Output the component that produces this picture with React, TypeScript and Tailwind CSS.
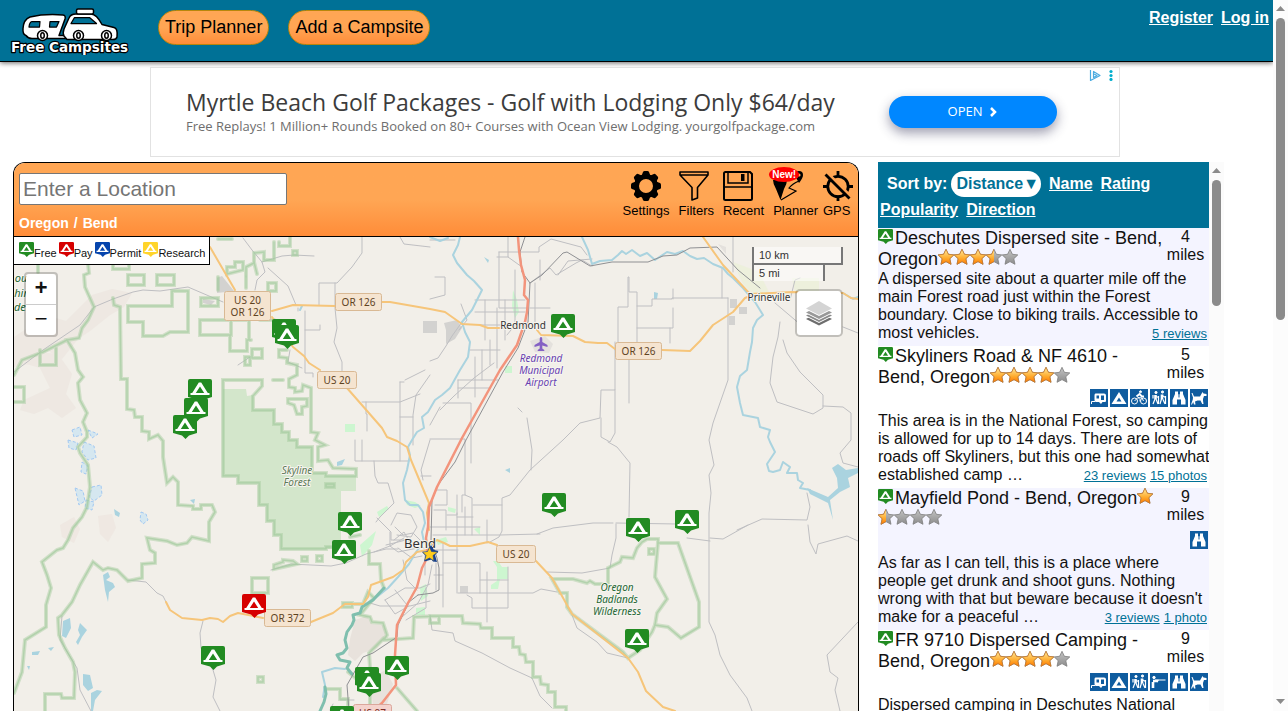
import type { ReactNode } from 'react'

type PinColor = 'green' | 'red' | 'blue' | 'yellow'
type Activity = 'rv' | 'tent' | 'bike' | 'hike' | 'view' | 'shoot' | 'dog'

interface Campsite {
  name: string
  miles: number
  stars: number
  activities: Activity[]
  text: string
  links: string[]
}

const campsites: Campsite[] = [
  {
    name: 'Deschutes Dispersed site - Bend, Oregon',
    miles: 4,
    stars: 3.5,
    activities: [],
    text: 'A dispersed site about a quarter mile off the main Forest road just within the Forest boundary. Close to biking trails. Accessible to most vehicles.',
    links: ['5 reviews'],
  },
  {
    name: 'Skyliners Road & NF 4610 - Bend, Oregon',
    miles: 5,
    stars: 4,
    activities: ['rv', 'tent', 'bike', 'hike', 'view', 'dog'],
    text: 'This area is in the National Forest, so camping is allowed for up to 14 days. There are lots of roads off Skyliners, but this one had somewhat established camp …',
    links: ['23 reviews', '15 photos'],
  },
  {
    name: 'Mayfield Pond - Bend, Oregon',
    miles: 9,
    stars: 1.5,
    activities: ['view'],
    text: "As far as I can tell, this is a place where people get drunk and shoot guns. Nothing wrong with that but beware because it doesn't make for a peaceful …",
    links: ['3 reviews', '1 photo'],
  },
  {
    name: 'FR 9710 Dispersed Camping - Bend, Oregon',
    miles: 9,
    stars: 4,
    activities: ['rv', 'tent', 'hike', 'shoot', 'view', 'dog'],
    text: 'Dispersed camping in Deschutes National',
    links: [],
  },
]

const legend: { label: string; color: PinColor }[] = [
  { label: 'Free', color: 'green' },
  { label: 'Pay', color: 'red' },
  { label: 'Permit', color: 'blue' },
  { label: 'Research', color: 'yellow' },
]

const pins: { x: number; y: number; color: PinColor }[] = [
  { x: 272, y: 319, color: 'green' },
  { x: 275, y: 325, color: 'green' },
  { x: 551, y: 314, color: 'green' },
  { x: 188, y: 379, color: 'green' },
  { x: 184, y: 398, color: 'green' },
  { x: 173, y: 415, color: 'green' },
  { x: 338, y: 512, color: 'green' },
  { x: 332, y: 540, color: 'green' },
  { x: 542, y: 493, color: 'green' },
  { x: 626, y: 518, color: 'green' },
  { x: 675, y: 510, color: 'green' },
  { x: 242, y: 594, color: 'red' },
  { x: 201, y: 646, color: 'green' },
  { x: 625, y: 629, color: 'green' },
  { x: 385, y: 656, color: 'green' },
  { x: 355, y: 667, color: 'green' },
  { x: 357, y: 673, color: 'green' },
  { x: 330, y: 706, color: 'green' },
]

const shields: { x: number; y: number; w: number; lines: string[]; pink?: boolean }[] = [
  { x: 224, y: 291, w: 47, lines: ['US 20', 'OR 126'] },
  { x: 335, y: 293, w: 47, lines: ['OR 126'] },
  { x: 317, y: 371, w: 40, lines: ['US 20'] },
  { x: 615, y: 342, w: 47, lines: ['OR 126'] },
  { x: 496, y: 545, w: 40, lines: ['US 20'] },
  { x: 264, y: 609, w: 47, lines: ['OR 372'] },
  { x: 353, y: 704, w: 39, lines: ['US 97'], pink: true },
]

const pinFill: Record<PinColor, string> = {
  green: '#228b22',
  red: '#d60000',
  blue: '#0645ad',
  yellow: '#ffd42a',
}

function PinShape({ color }: { color: PinColor }) {
  return (
    <>
      <path d="M2 0h20a2 2 0 0 1 2 2v16l-8 2.5-3.500 3.500-3.500-3.500L0 18V2a2 2 0 0 1 2-2z" fill={pinFill[color]} />
      <path d="M10.800 3.500h2.400L19.800 14h1.700v2h-19v-2h1.700zM12 7.500 7.800 14h8.400z" fill="#fff" fillRule="evenodd" />
    </>
  )
}

function Pin({ color, className }: { color: PinColor; className?: string }) {
  return (
    <svg viewBox="0 0 24 24" className={className}>
      <PinShape color={color} />
    </svg>
  )
}

const STAR = 'M8 .3l2.400 5 5.400.6-4 3.800 1.200 5.600L8 12.600l-5 2.700 1.200-5.600L.2 5.900l5.400-.6z'

function Star({ fill }: { fill: number }) {
  return (
    <svg viewBox="0 0 16 16" className="inline-block size-4 align-baseline">
      <path d={STAR} fill="url(#starOff)" stroke="#7d7d7d" strokeWidth=".8" />
      {fill > 0 && (
        <path
          d={STAR}
          fill="url(#starOn)"
          stroke="#c87a2c"
          strokeWidth=".8"
          clipPath={fill < 1 ? 'url(#starHalf)' : undefined}
        />
      )}
    </svg>
  )
}

const activityArt: Record<Activity, ReactNode> = {
  rv: (
    <>
      <path d="M5.500 4.500H14q2 0 2 2V12q0 1-1 1h-2.500L11 15l-2-2H6q-1.500 0-1.500-2V6.500q0-2 1-2z" fill="#fff" />
      <path d="M6.500 6.500h2.500v3H6.500zM11 6.500h3v4.500h-3z" fill="#0f5c9f" />
      <path d="M1.500 15v-2.500H5" stroke="#fff" fill="none" />
    </>
  ),
  tent: <path d="M9 3 16.500 15h-15zM9 8.500 6.500 12.500h5z" fill="#fff" fillRule="evenodd" />,
  bike: (
    <g stroke="#fff" fill="none">
      <circle cx="4.500" cy="12" r="3" />
      <circle cx="13.500" cy="12" r="3" />
      <path d="M4.500 12 8 8.500l2 2v2M8 8.500 12 9l1.500 3" />
      <path d="m6.500 7.500 3-2.500 2.500 2.500h2" strokeWidth="2" />
      <circle cx="10.500" cy="2.800" r="1" fill="#fff" />
    </g>
  ),
  hike: (
    <g stroke="#fff" fill="none">
      <circle cx="6" cy="3.500" r="1.100" fill="#fff" />
      <circle cx="12.500" cy="3" r="1.100" fill="#fff" />
      <path d="M5.500 6v4M12 5.500v5" strokeWidth="2.600" />
      <path d="m5 10-2 5M6 10l2 5M8.500 7v8M3 6v3.500M11.500 10l-1.500 5M13 10.500l2 4.500M15.500 7v8M13 7l2.500 1.500M6 7.500l2.500 1" strokeWidth="1.200" />
    </g>
  ),
  view: (
    <path d="M5 2.500h3V5l.5.500v3h1v-3L10 5V2.500h3V5l2.500 6v4.500h-4.500V10.500H7v5H2.500V11L5 5z" fill="#fff" />
  ),
  shoot: (
    <g stroke="#fff" fill="none">
      <circle cx="4" cy="4.500" r="1.200" fill="#fff" />
      <path d="M3 8h5M3 9v6" strokeWidth="2.600" />
      <path d="M5 7h10.500M7 9l2-2.500" strokeWidth="1.200" />
    </g>
  ),
  dog: (
    <path d="M1.500 4 2.500 4 4 7.500h6L12.500 3l1 1.500 3 .5v2h-2.500l-1 3v1.500l.5 3.500h-1.300l-1.700-3.500H7.500L5 12.500l.5 3H4L3.200 13 2 15.500H1l1.800-5L3 8.500z" fill="#fff" />
  ),
}

function ActivityIcon({ kind }: { kind: Activity }) {
  return (
    <svg viewBox="0 0 18 18" className="size-[18px] bg-[#0f5c9f]">
      {activityArt[kind]}
    </svg>
  )
}

function Logo() {
  return (
    <svg viewBox="0 0 240 96" className="h-12 w-[120px]">
      <g fill="#fff" stroke="#000" strokeWidth="3" strokeLinejoin="round">
        <path d="M32 57q-7-2-6-14 1-18 14-23 30-7 66-4 6 1 4 8L98 57h14v6H44q-8 0-12-6z" />
        <path d="M108 58q-3-6 0-14l10-22q3-8 14-8h30q11 0 22 21l24 6q8 2 6 19-1 5-8 5H114z" />
        <rect x="133" y="4" width="34" height="10" rx="3" />
      </g>
      <g fill="#007196" stroke="#000" strokeWidth="2.500" strokeLinejoin="round">
        <path d="M122 33l7-12h30l14 12zM38 40q1-10 6-11h16l-1 11zM80 29h18l-5 11H79z" />
      </g>
      <g fill="#fff" stroke="#000" strokeWidth="3">
        <circle cx="65" cy="57" r="10" />
        <circle cx="137" cy="57" r="10" />
        <circle cx="193" cy="57" r="10" />
        <ellipse cx="65" cy="57" rx="3.500" ry="5.500" />
        <ellipse cx="137" cy="57" rx="3.500" ry="5.500" />
        <ellipse cx="193" cy="57" rx="3.500" ry="5.500" />
      </g>
      <text
        x="2"
        y="90"
        fontSize="27"
        fontWeight="bold"
        fill="#fff"
        stroke="#000"
        strokeWidth="5"
        strokeLinejoin="round"
        paintOrder="stroke"
        className="font-['DejaVu_Sans',sans-serif]"
      >
        Free Campsites
      </text>
    </svg>
  )
}

const GearIcon = () => (
  <svg viewBox="0 0 30 30" className="size-[30px]">
    <circle cx="15" cy="15" r="9.500" fill="none" stroke="#000" strokeWidth="5" />
    {[0, 45, 90, 135, 180, 225, 270, 315].map(a => (
      <path key={a} d="M10.500 5 12 1q.5-1 1.500-1h3q1 0 1.500 1l1.500 4z" transform={`rotate(${a} 15 15)`} />
    ))}
  </svg>
)
const FilterIcon = () => (
  <svg viewBox="0 0 30 30" className="size-[30px]" fill="none" stroke="#000" strokeWidth="1.600" strokeLinejoin="round">
    <path d="M1 1h28v3L18.500 16.500V27L13 29V16.500L1 4zM1 4h28" />
  </svg>
)
const DiskIcon = () => (
  <svg viewBox="0 0 30 30" className="size-[30px]">
    <path d="M1 2.500Q1 1 2.500 1H27l2 2v24.500q0 1.500-1.500 1.500h-25Q1 29 1 27.500z" fill="none" stroke="#000" strokeWidth="2" />
    <path d="M5 1v11h20V1M1 16h28" fill="none" stroke="#000" strokeWidth="1.500" />
    <path d="M18 3h3.500v7H18z" />
  </svg>
)
const PlannerIcon = () => (
  <svg viewBox="0 0 30 30" className="size-[30px]">
    <path d="M0 9h14q0 4-3 9L7.500 29 3 18Q0 13 0 9z" />
    <path d="M26 0a4 4 0 0 1 4 4q0 3-4 8-3-5-4-8a4 4 0 0 1 4-4z" />
    <circle cx="26" cy="4" r="1.600" fill="#ffa352" />
    <path d="M26 10q-7 3-10 7l7 3-15 9" fill="none" stroke="#000" strokeWidth="1.200" />
  </svg>
)
const GpsOffIcon = () => (
  <svg viewBox="0 0 30 30" className="size-[30px]" fill="none" stroke="#000" strokeWidth="2.800">
    <circle cx="15" cy="15.500" r="10.200" />
    <path d="M15 0v6M15 24.500V30M0 15.500h6M24 15.500h6" />
    <path d="M5 2.500 29 26.500" stroke="#ffa352" strokeWidth="3" />
    <path d="m2.500 3.500 24 24" />
  </svg>
)

function Tool({ label, icon, center }: { label: string; icon: ReactNode; center?: boolean }) {
  return (
    <button className={center ? 'flex flex-col items-center' : 'flex flex-col items-start'}>
      {icon}
      <span className="mt-[2px] text-[13px] leading-4">{label}</span>
    </button>
  )
}

/* Basemap */

const forestBoundaries = [
  'M88 264 89 273 84 275 85 287 94 307 88 320 82 328 79 338 67 340 75 353 78 370 83 377 78 383 80 400 87 413 83 422 87 432 87 437 78 447 80 453 88 465 90 487 87 507 82 517 73 528 68 540 63 548 57 550 42 562 47 575 51 588 46 605 46 627 25 640 22 672 14 693',
  'M67 340 43 352 22 360 14 375',
  'M40 350v15h16v-17M14 387h10v15h-10',
  'M38 264v8',
  'M113 264v5h16v-5',
  'M128 275h16v10h-16zM157 275h17v10h-17z',
  'M172 291h16v41h-18l-7 4h-20v-14h-15v-16h44z',
  'M113 298 114 305 120 307 121 379 127 379 127 409 134 410 135 417 142 417 142 431 149 432 149 439 158 435 163 441 163 457 167 483 173 477 178 482 178 505 193 506 193 509 201 509 201 505 212 505 215 512 209 522 209 541 192 537 187 543 177 545 167 541 147 538 150 550 155 553 155 563 142 564 142 578 128 581 117 570 108 568 103 570 93 562 80 585 72 602 62 615 58 618 59 635 65 648 73 662 75 672 74 698 62 698 61 694 45 694 45 711',
  'M218 239h14M290 237v9h-11v-4M274 242v18h-10v-8l-10 1v10l-8 4v10M243 262h-8v5h-8v7l16-4zM268 283h8v8h-8zM293 251h4v4h-4z',
  'M246 276v12M254 262l3 12',
  'M201 298h17v8h-17zM200 320h31v15h-31zM218 277v13M231 320h18v20M230 335v16h17v-11h4',
  'M252 349h10v9h-10zM245 357h5v8h-5zM260 320h14',
  'M287 350h-8v7l8 1v5l10 2v10l-8 4v8l6 1v4l7-1 1-6 8 3v44l7 1-3 7 10 5-7 2v14l10-1 5 8 23 1v7h-30v-3h-14',
  'M288 399h19v7l-5 1v7h-5l-3-9-6-2zM273 380h10M326 484h8v3h-8z',
  'M223 476v-96h39v6l-9 10v14h21v14h8v8h7v8h8v7h15v26',
  'M223 476h15v7h21v22h8v16h7v14h7v14h45v-2h22M350 537l10-2M369 551v13h11l1 16 3 8',
  'M302 557h5v4h-5zM317 556h5v5h-5zM274 565l9-3v-2l10 1 4 3-14 3-9 2zM252 578h16v15h-16zM258 677h5v5h-5z',
  'M343 603h9v4h-9zM352 604h11l5-12 6 6-14 17 10 2 2 5 11 1 4 12-3 5 29-2 1-21 25-1v7h-9v-7h32l1 7 17 1 1 4h11v10h21v9h6l1 7 5 1 1 7h7v15h7l1 7 7 1v7h7v15h11v4',
  'M384 638l-15 15 1 14M348 672l10 8M370 690v21M397 688l20 23M326 689h14v10h8v6',
  'M552 579h21l14 4 3-2 5 3h13v-16l12-6 2-5 11 1 4-10 5-6 5-3h11v4h20l21 59v25l-18 11-13-11-13-2-3 7-12 18-12 8-5-6-51-38-5-7v-14h-7z',
  'M658 543l-2 22-1 12 12 22-10 14-2 12M649 549h5v5h-5z',
]

const rivers = [
  'M460 237 458 245 453 255 457 263 467 275 474 281 482 290 478 298 472 310 462 322 465 332 470 342 468 357 460 370 450 388 442 395 435 400 428 412 422 417 424 428 417 432 412 440 408 447 410 455 407 470 403 483 405 500 410 505 418 505 423 512 425 523 422 532 424 542 416 552 409 564 398 577 388 588 373 600',
  'M582 237 588 250 592 264 600 261 612 260 618 255 622 251 626 254 632 250 640 256 647 253 655 260 667 252 675 254 683 251 690 256 697 259 704 258 713 264 723 268 728 274 733 278 743 288 755 302 763 315 757 320 753 328 752 342 750 352 747 370 740 376 737 387 740 403 743 415 758 418 760 427 770 430 768 437 770 442 775 452 767 464 769 471 773 472 780 470 783 462 790 467 787 473 797 473 798 480 803 483 800 488 810 490',
  'M430 237l10 4 8-3M345 669l-10-1-13 4 3 13-2 12',
  'M843 293l10 6 5-2M300 310l2-4',
]

const minorRoads = [
  'M62 616 60 640 77 668 80 690 91 711M128 580 146 582 157 593 163 596 166 602',
  'M203 621 200 633 201 648 213 670 216 680 213 697 220 711',
  'M14 372 43 350 80 325 94 307 113 299 133 292 143 290 160 291 188 287 223 302',
  'M243 238 252 250 262 262 265 272 257 280 255 290M262 262l20-6 12-1 20 1M268 268l20 18 8 19M400 237l4 7 26 3',
  'M362 237v16l-10 14-15 16h-18v22M335 283v25l2 20-3 14 8 20v9M305 311v62h8v4M298 311v-3M305 330h15v-5M238 365l12-8',
  'M290 350l-2 12 14 6',
  'M430 375l-14 20-3 20v30M400 382h4M400 382v79M362 402h38l20-8M366 402v12h1v17M355 440v21h54M362 440v21M400 417h13M374 461l1 15 3 7h10l6 20-14 14-4 5M430 361l8-3 8-12 6-10 10-14M430 440l-9 30 2 10M421 476h10',
  'M499 252h40v-5l12-8 30 8 6 8M499 252v56h28M508 237v20l14 10M515 270v55l-8 10M475 300h50M475 312h50M480 325h40M485 300v40M497 308v60M505 300v40M490 340v25M535 283v40M530 308h20M540 260v20M470 350h30M475 357v40M482 350v30M458 380h40M458 388h32M443 403h28v60M458 380v18M440 410l14-14 20-18 20-15',
  'M430 240h25M497 257h11M435 277h10v18l-15 4M461 304l6 16-8 10M425 370l-20 10',
  'M530 283 550 268 556 275 576 263 582 260 592 266',
  'M558 275l10-14 24-2',
  'M430 439h35v56l7 3v37M462 512v-17h3M473 505h29M430 425l10-18',
  'M490 542l9-5 3-6v-33l8-3 20-25 33-30 17-17 20-5 1-28h14v-40M615 350v-8M615 390v43l-5 9-9-5v-19M608 442l9 5 13 16-1 54M629 403v-46M637 342v-50h-8v-15h-1v30h-10v35M637 328h36v-20M637 306h15v-7h20v-1h56M673 299v-10M728 298v82l-15 43-4 17 5 25-5 10 2 18-2 20v109l6 13 5 20 10 20 17 23 5 13',
  'M527 418l5 32-1 20M518 408l4 4M733 237v35M670 328v15',
  'M783 340 787 353 800 372 823 395v13l-10 6-36-12-7-19 3-26 5-20 2-15M823 406l20 1 8 6v27l-11 13 3 10 15 4M775 303l26 22M843 327l15 6M722 298v-30M790 300l5-20 5-2',
  'M737 530l25-11 45 1 3-13-3-14M808 525l2 17 6 12 2-10 29-8 11 5M858 622 827 655 830 672 838 678 835 690 840 711M616 523l61 1M710 538l13 1 25-14M687 538l23 3M537 534l16-6 40-5h20',
  'M547 572l35 1 28-5 2-13 4-17v-14M458 593h75l8-4 16 3M572 615 577 628 597 642 607 653 628 658M430 615l2 15 21 3 2 8 27 12 28 15 22 10 8 18 12 12',
  'M433 535h67l40-1M443 543v64M457 513v80M443 563h37v30M480 580h28M508 567v41h-36v-10l-5-3M487 572v50M487 520v23M465 507v28M473 517h-16M434 510h12v20M437 490h10v15h-12M447 515h10v-20M430 527h50M434 550h24M434 575h9M436 563v27',
  'M385 600l20-12h15l10-4M370 603l10 3h30l20-5M390 532v14l8 6 20-4M374 552l16-6 14-8M377 518l14 14v8h20M391 525l6-12 14 2 6 12-6 10-14-2M394 540l10-8 8 14 12 2M395 527l8 8 10-2 8 8M398 548l14 10 10-2M386 545l20-5 12 4M403 560l4 20 10 10M395 590l12 15M425 555v20M432 565l-4 20-10 18-16 14M385 600l10 14 14-8',
  'M271 570l20-6 20 1 20 1 15-3 20-9 20-5h12',
  'M340 700h14M333 704l-3 6M406 620l20-12v-20',
]

const highways = [
  'M210 247 235 290M272 317 293 347 304 356 309 363 320 370M347 388 382 428 387 437 397 441 407 447 411 460 429 503 427 513 429 530',
  'M272 311 293 305 335 306M382 302 390 302 430 309 445 312 462 324 480 325 488 328 513 328 523 325M537 330 541 335 573 336 585 342 598 343 607 343 615 349M662 350 690 351 700 341 713 325 733 312 745 298 750 296M703 237 723 265 750 294 792 292 843 293 851 298 858 299',
  'M430 545 437 540 444 543 450 546 470 546 488 542 497 545M536 561 552 578 572 614 628 658 638 672 646 691 663 707 675 711',
  'M166 602 170 610 182 618 202 620 210 618 218 619 223 622 230 616 238 613 263 618M311 622 333 613 345 604 363 604 368 597 371 585 393 577 403 570 406 562 417 552 427 550',
]

const railways = [
  'M525 237 520 252 522 272 530 283 528 322 518 348 503 372 466 440 455 462 438 485 432 500 431 540 437 558 439 568 439 590 433 593 418 595',
  'M530 283 542 275 563 253 567 252 590 266 612 262 648 262 663 256 677 255 690 248 717 247 738 270 760 288',
  'M418 595 409 602 398 625 397 637 373 653 363 657 347 685 349 711',
]

function MapLabel({ x, y, color, italic, size = 10, children }: { x: number; y: number; color: string; italic?: boolean; size?: number; children: string }) {
  return (
    <text
      x={x}
      y={y}
      textAnchor="middle"
      fontSize={size}
      fontStyle={italic ? 'italic' : 'normal'}
      fill={color}
      stroke="#f7f5f0"
      strokeWidth="2"
      strokeLinejoin="round"
      paintOrder="stroke"
    >
      {children}
    </text>
  )
}

function BaseMap() {
  return (
    <svg
      viewBox="14 237 844 474"
      preserveAspectRatio="xMidYMin slice"
      className="absolute inset-0 size-full bg-[#f2efe9] font-['Noto_Sans',sans-serif]"
    >
      {/* lava fields and urban land */}
      <g fill="#ebe2dc" opacity=".5">
        <path d="M92 295l20-6 20 4-8 14-14 8-20 16-12 8-16 20-14-8-14 12-20 4v-30l18-12 20-8 14 4 10-10z" />
        <path d="M18 350l40 4 14 20-6 20 10 14-14 10-14-10-14 6-14-4 4-10 26-12-10-20-20-6z" />
        <path d="M98 516l14-2 4 14-8 14-8-8zM60 525l14-8 6 12-6 14-12-6z" />
      </g>
      <path d="M355 620l12-4 5 8 12 1 3 11-10 12-14 5-8 8-7-6 2-16zM370 680l15-10 8 14-6 20-14 2z" fill="#e8e2dc" />
      <path d="M217 278l5-2 12 15-17 2zM203 299l12 2-4 4-8-2zM423 321h14v12h-14zM444 323l13-3 5 8-7 11-9 5v-14zM730 299h7v9h-7zM739 307h8v7h-8zM729 316h6v9h-6zM460 586h8v7h-8z" fill="#d3d2d0" />
      <path d="M718 244l8 3v7zM530 341l15-5 8 8-4 9-14-1z" fill="#e4e1dd" />
      <path d="M733 262l26 10 10 20-12 6-14-14zM792 278h27v14h-24z" fill="#eaf0d4" opacity=".6" />
      <path d="M223 389h23l1 7 6-1v15h21v14h8v8h7v8h8v7h15v26h14v3h30v15h-15v58h-60v-14h-7v-14h-7v-16h-8v-22h-21v-7h-15z" fill="#d3e6cb" />
      <path d="M345 424h10v8h-10zM493 561h5l4 6h6v12h-8l-2 10h-7v-4l6-4v-14zM420 587l6-3 2 12-7 5zM416 608l9-1v8h-9zM505 366h7v7h-7zM405 500l10 2 6 4-6 2-8-3zM377 512l10-6 2 3-10 8zM360 545l16-14-4 14-10 12zM448 507l8 2-1 4-7-2zM474 529l6-2v8zM513 290l4 10 2 12-4 6-3-12zM436 540l10-3 2 5-10 3z" fill="#cdf6d0" />

      {/* lakes */}
      <g fill="#aad3df">
        <path d="M103 575l5-3 2 5-4 3 7 3 2 4-6 5-1 10-3-12zM63 621l7-3 1 10-5 10-4-2zM80 623l7 7-5 7-4 8-2-3 4-7-2-5zM83 674l7 1 3 13-5 3-5-6zM97 690l5 1-7 9-2 11h-2v-18zM32 652l8-1-2 4h-6zM48 648l6-1-3 4zM27 666h3l-1 4zM114 509l6 4-1 4-4-2zM190 500l5-1-1 5zM337 462l8-3-3 6-5 1zM484 257l5 3-1 3zM654 292l4 1-1 6h-3zM505 470l5-2v5z" />
        <path d="M807 488l21 9 10-9-1-10-5-10 6-4 8 6 12-2v5l-10 5 2 9-10 5-10 8 3 20-5-17-18-9z" />
      </g>
      <g fill="#cfe6f2" stroke="#8fc0f5" strokeDasharray="3 2" opacity=".8">
        <path d="M72 430l8-3 2 8-8 2zM68 440l10 3-2 7-7-2zM84 442l10 4 2 12-8 2-6-8zM88 430l10 4-6 4zM82 462l6 4-2 8-5-2zM75 488l8 3 2 10-6 4zM92 487l9-2 1 10-8 6-5-4zM86 500l8 2-2 8-7-2zM141 512l5 2 2 6-5 4-3-4z" />
      </g>

      <g fill="none" strokeLinejoin="round" strokeLinecap="round">
        <g stroke="#bfbfc2">
          {minorRoads.map(d => <path key={d} d={d} />)}
        </g>
        <g stroke="#aad3df" strokeWidth="2">
          {rivers.map(d => <path key={d} d={d} />)}
        </g>
        <g stroke="#a7cca0" strokeWidth="4" opacity=".45" strokeLinejoin="miter">
          {forestBoundaries.map(d => <path key={d} d={d} />)}
        </g>
        <g stroke="#a3cc9f" strokeWidth="1.500" opacity=".65" strokeLinejoin="miter">
          {forestBoundaries.map(d => <path key={d} d={d} />)}
        </g>
        <path
          d="M384 588 373 600 362 607 360 613 353 615 354 620 352 625 347 632 345 640 347 648 343 653 337 655 340 660 350 662 347 668 352 674M325 687 326 694 324 702 320 711"
          stroke="#7fbfae"
          strokeWidth="3"
        />
        <g stroke="#8f9093">
          {railways.map(d => <path key={d} d={d} />)}
        </g>
        <g stroke="#f6c57a" strokeWidth="2">
          {highways.map(d => <path key={d} d={d} />)}
        </g>
        <path
          d="M518 237 519 250 521 265 525 280 524 295 528 300 527 312 525 322 517 345 500 370 462 438 437 487 429 507 428 527 426 538 428 556 422 568 417 587 408 603 397 625 395 655 396 685 382 703 373 711"
          stroke="#f3947c"
          strokeWidth="2.500"
        />
      </g>

      <MapLabel x={769} y={301} color="#333">Prineville</MapLabel>
      <MapLabel x={523} y={329} color="#333">Redmond</MapLabel>
      <MapLabel x={420} y={548} color="#333" size={13}>Bend</MapLabel>
      <MapLabel x={297} y={474} color="#5d7a57" italic>Skyline</MapLabel>
      <MapLabel x={297} y={486} color="#5d7a57" italic>Forest</MapLabel>
      <MapLabel x={541} y={362} color="#6742b0" italic>Redmond</MapLabel>
      <MapLabel x={541} y={374} color="#6742b0" italic>Municipal</MapLabel>
      <MapLabel x={541} y={386} color="#6742b0" italic>Airport</MapLabel>
      <MapLabel x={617} y={591} color="#1d6633" italic>Oregon</MapLabel>
      <MapLabel x={617} y={603} color="#1d6633" italic>Badlands</MapLabel>
      <MapLabel x={617} y={615} color="#1d6633" italic>Wilderness</MapLabel>
      <MapLabel x={21} y={282} color="#1d6633" italic size={11}>ou</MapLabel>
      <MapLabel x={22} y={297} color="#1d6633" italic size={11}>hin</MapLabel>
      <MapLabel x={22} y={311} color="#1d6633" italic size={11}>der</MapLabel>
      <path d="M541 337q1.300 0 1.300 2v3l5.200 3v2l-5.200-1.500v3l2 1.500v1h-6.600v-1l2-1.500v-3L534.500 347v-2l5.200-3v-3q0-2 1.300-2z" fill="#8461c4" />

      {shields.map(s => (
        <g key={`${s.x}-${s.y}`}>
          <rect
            x={s.x + 0.5}
            y={s.y + 0.5}
            width={s.w - 1}
            height={s.lines.length * 12 + 5}
            rx="2"
            fill={s.pink ? '#f5d3cd' : '#f5e4d0'}
            stroke={s.pink ? '#dba79c' : '#d9b994'}
          />
          {s.lines.map((line, i) => (
            <text key={line} x={s.x + s.w / 2} y={s.y + 13 + i * 12} textAnchor="middle" fontSize="10" fill={s.pink ? '#7a2f28' : '#5e431f'}>
              {line}
            </text>
          ))}
        </g>
      ))}

      {/* current search location */}
      <path d="M431 545l3 5 4.500 1-3.500 4 2 7-4-.5-1.500-2-7 2 1-6-3-3 5-1z" fill="#17408b" />
      <path d="M429.500 547l2 4.500 6.500.5-5 3.500 1 5.500-4.500-3-5 2.500 1.500-5-3.500-3.500 5-.5z" fill="#ffcc1a" stroke="#17408b" strokeWidth=".6" />

      {pins.map(p => (
        <g key={`${p.x}-${p.y}`} transform={`translate(${p.x} ${p.y})`}>
          <PinShape color={p.color} />
        </g>
      ))}
    </svg>
  )
}

function MapControls() {
  return (
    <>
      <ul className="absolute left-0 top-0 flex h-7 items-start gap-[2px] border-b border-r border-black bg-white pl-[5px] pr-1 pt-[5px] text-[11px] leading-[22px]">
        {legend.map(l => (
          <li key={l.label} className="flex">
            <Pin color={l.color} className="size-[15px]" />
            {l.label}
          </li>
        ))}
      </ul>

      <div className="absolute left-[10px] top-[35px] flex w-[34px] flex-col rounded border-2 border-black/20 bg-clip-padding font-['Liberation_Mono',monospace] text-[22px] leading-[32px]">
        <button className="h-[31px] overflow-hidden rounded-t-sm border-b border-[#ccc] bg-white font-bold">+</button>
        <button className="h-[30px] overflow-hidden rounded-b-sm bg-white">−</button>
      </div>

      <div className="absolute right-[15px] top-[10px] w-[91px] text-[11px] leading-[16px] text-[#333]">
        <div className="border-2 border-t-0 border-[#777] bg-white/50 pl-[5px]">10 km</div>
        <div className="-mt-[2px] w-[73px] border-2 border-b-0 border-[#777] bg-white/50 pl-[5px]">5 mi</div>
      </div>

      <button aria-label="Layers" className="absolute right-[15px] top-[52px] grid size-12 place-items-center rounded-[5px] border-2 border-black/20 bg-white bg-clip-padding">
        <svg viewBox="0 0 26 26" className="size-[26px]">
          <path d="M13 12 26 19 13 25.500 0 19z" fill="#6e6e6e" />
          <path d="M13 10 26 16.500 13 23 0 16.500z" fill="#fff" />
          <path d="M13 9 26 15.500 13 22 0 15.500z" fill="#8a8a8a" />
          <path d="M13 7 26 13.500 13 20 0 13.500z" fill="#fff" />
          <path d="M13 6 26 12.500 13 19 0 12.500z" fill="#999" />
          <path d="M13 3 26 9.500 13 16 0 9.500z" fill="#fff" />
          <path d="M13 1 26 8.500 13 15 0 8.500z" fill="#d4d4d4" />
        </svg>
      </button>
    </>
  )
}

function ScrollUp() {
  return (
    <svg viewBox="0 0 9 5" className="h-[5px] w-[9px]" fill="#8b8b8b">
      <path d="M4.500 0 9 5H0z" />
    </svg>
  )
}

function CampsiteRow({ site }: { site: Campsite }) {
  return (
    <li className="pb-1 odd:bg-[#f4f4ff]">
      <div className="flex h-[42px]">
        <h3 className="w-[288px] text-[18px] leading-[21px]">
          <a href="#site">
            <Pin color="green" className="mr-[2px] inline-block size-[15px] align-baseline" />
            {site.name}
          </a>
          {[0, 1, 2, 3, 4].map(i => <Star key={i} fill={site.stars - i} />)}
        </h3>
        <p className="flex-1 pr-1 text-center leading-[18px]">
          {site.miles}
          <br />
          miles
        </p>
      </div>
      {site.activities.length > 0 && (
        <div className="flex h-6 justify-end gap-[2px] pr-px pt-px">
          {site.activities.map(a => <ActivityIcon key={a} kind={a} />)}
        </div>
      )}
      <p className="-mr-px leading-[18px]">
        {site.text}
        {site.links.length > 0 && (
          <span className="float-right flex h-[18px] gap-1 pr-[3px] text-[13px] leading-5 text-[#007196]">
            {site.links.map(l => <a key={l} href="#reviews" className="underline">{l}</a>)}
          </span>
        )}
      </p>
    </li>
  )
}

export default function App() {
  return (
    <div className="flex h-screen overflow-hidden bg-white font-['Liberation_Sans',Arial,sans-serif] text-base text-[#111]">
      <svg className="absolute size-0" aria-hidden="true">
        <defs>
          <linearGradient id="starOn" x1="0" y1="0" x2="0" y2="1">
            <stop offset=".1" stopColor="#ffe08a" />
            <stop offset=".6" stopColor="#ffab2e" />
            <stop offset="1" stopColor="#ff7800" />
          </linearGradient>
          <linearGradient id="starOff" x1="0" y1="0" x2="0" y2="1">
            <stop offset="0" stopColor="#c4c4c4" />
            <stop offset="1" stopColor="#8c8c8c" />
          </linearGradient>
          <clipPath id="starHalf"><path d="M0 0h8v16H0z" /></clipPath>
        </defs>
      </svg>

      <div className="flex min-w-0 flex-1 flex-col">
        <header className="flex h-[62px] shrink-0 items-start border-b border-black bg-[#007196] pl-[10px] pr-1 shadow-[0_1px_5px_rgba(0,0,0,0.6)]">
          <a href="#home" aria-label="Free Campsites" className="mt-[7px]"><Logo /></a>
          <nav className="ml-7 mt-[10px] flex gap-[19px] text-[18px] text-black">
            <button className="h-[35px] rounded-full border border-[#b8860b] bg-linear-to-b from-[#ffa654] from-50% to-[#ff8c38] px-[6px]">Trip Planner</button>
            <button className="h-[35px] rounded-full border border-[#b8860b] bg-linear-to-b from-[#ffa654] from-50% to-[#ff8c38] px-[6px]">Add a Campsite</button>
          </nav>
          <div className="ml-auto mt-2 flex gap-2 font-bold leading-5 text-white">
            <a href="#register" className="underline">Register</a>
            <a href="#login" className="underline">Log in</a>
          </div>
        </header>

        {/* Ad banner */}
        <div className="shrink-0 pr-[3px] pt-[5px]">
          <aside className="relative mx-auto flex h-[90px] max-w-[970px] items-center justify-between border border-[#e2e2e2] bg-white pl-[35px] pr-[62px] font-['Open_Sans',sans-serif]">
            <div className="pt-[2px]">
              <h2 className="text-[23px] leading-[26px] text-[#3c3c3c]">Myrtle Beach Golf Packages - Golf with Lodging Only $64/day</h2>
              <p className="text-[13px] leading-[22px] text-[#6e6e6e]">Free Replays! 1 Million+ Rounds Booked on 80+ Courses with Ocean View Lodging. yourgolfpackage.com</p>
            </div>
            <button className="flex h-8 w-[168px] items-center justify-center gap-2 rounded-full bg-[#0087ff] text-[13px] text-white shadow-[0_5px_12px_rgba(40,40,80,0.45)]">
              OPEN
              <svg viewBox="0 0 8 12" className="h-3 w-2" fill="none" stroke="#fff" strokeWidth="2.500"><path d="m1 2 4 4-4 4" /></svg>
            </button>
            <div className="absolute right-[6px] top-px flex gap-2">
              <svg viewBox="0 0 12 12" className="size-3" fill="none" stroke="#4aabe0" strokeWidth="1.200">
                <path d="M1.500 1v10.500L11 6.500 4.500 2.500v6L8 6.500 5 5" strokeLinejoin="round" />
              </svg>
              <svg viewBox="0 0 4 12" className="h-3 w-1" fill="#00aecd">
                <circle cx="2" cy="2.500" r="1.600" /><circle cx="2" cy="6.500" r="1.600" /><circle cx="2" cy="10.400" r="1.600" />
              </svg>
            </div>
          </aside>
        </div>

        <main className="flex min-h-0 flex-1 gap-[19px] pl-[13px] pr-[49px] pt-[5px]">
          <section className="flex min-w-0 flex-1 flex-col overflow-hidden rounded-t-xl border border-b-0 border-black">
            <div className="flex h-[74px] shrink-0 justify-between border-b border-black bg-linear-to-b from-[#ffa654] from-50% to-[#ff8c38] px-[5px]">
              <div>
                <input
                  type="text"
                  aria-label="Location"
                  placeholder="Enter a Location"
                  className="mt-[10px] block h-8 w-[268px] rounded-[2px] border border-[#767676] bg-white px-[3px] text-[21px] placeholder:text-[#757575]"
                />
                <nav className="mt-[9px] flex gap-[5px] text-[14px] font-bold leading-[18px] text-white">
                  <a href="#oregon">Oregon</a>
                  <span>/</span>
                  <a href="#bend">Bend</a>
                </nav>
              </div>
              <div className="flex items-start gap-[9px] pt-2 text-black">
                <Tool label="Settings" icon={<GearIcon />} center />
                <Tool label="Filters" icon={<FilterIcon />} />
                <Tool label="Recent" icon={<DiskIcon />} />
                <div className="relative -mr-1">
                  <Tool label="Planner" icon={<PlannerIcon />} />
                  <span className="absolute -left-1 -top-1 rounded-[50%] bg-[#ff0000] px-[3px] text-[10px] font-bold leading-[15px] text-white">New!</span>
                </div>
                <Tool label="GPS" icon={<GpsOffIcon />} />
              </div>
            </div>
            <div className="relative flex-1 overflow-hidden">
              <BaseMap />
              <MapControls />
            </div>
          </section>

          <section className="flex w-[346px] shrink-0">
            <div className="min-w-0 flex-1">
              <div className="flex h-[66px] flex-wrap content-start gap-x-2 bg-[#007196] pl-[2px] pt-[9px] font-bold leading-[26px] text-white">
                <span className="-mr-1 pl-[7px]">Sort by:</span>
                <button className="rounded-full bg-white pl-[5px] pr-[2px] text-[#007196]">Distance▼</button>
                <a href="#name" className="underline">Name</a>
                <a href="#rating" className="underline">Rating</a>
                <span className="basis-full" />
                <a href="#popularity" className="underline">Popularity</a>
                <a href="#direction" className="underline">Direction</a>
              </div>
              <ul>
                {campsites.map(s => <CampsiteRow key={s.name} site={s} />)}
              </ul>
            </div>
            <div className="flex w-[15px] flex-col items-center bg-[#fbfbfb] pt-[6px]">
              <ScrollUp />
              <div className="mt-[7px] h-[126px] w-[9px] rounded-full bg-[#8b8b8b]" />
            </div>
          </section>
        </main>
      </div>

      <div className="flex w-[15px] shrink-0 flex-col items-center bg-[#fcfcfc] pb-[7px] pt-[6px]">
        <ScrollUp />
        <div className="mt-[7px] h-[302px] w-[9px] rounded-full bg-[#8b8b8b]" />
        <div className="mt-auto rotate-180"><ScrollUp /></div>
      </div>
    </div>
  )
}
